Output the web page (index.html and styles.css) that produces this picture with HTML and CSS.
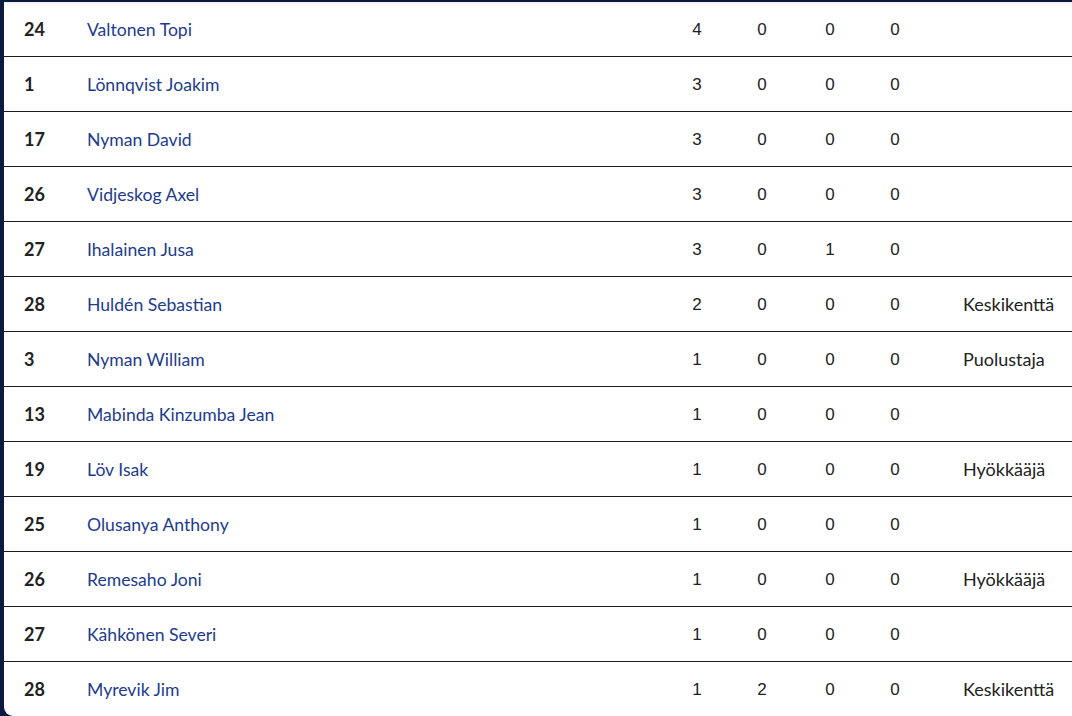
FILE: index.html
```html
<!DOCTYPE html>
<html lang="fi">
<head>
<meta charset="utf-8">
<title>Pelaajat</title>
<link rel="stylesheet" href="styles.css">
</head>
<body>
<div class="frame">
  <div class="card">
    <div class="row"><span class="num">24</span><a class="name">Valtonen Topi</a><span class="st">4</span><span class="st">0</span><span class="st">0</span><span class="st">0</span><span class="pos"></span></div>
    <div class="row"><span class="num">1</span><a class="name">Lönnqvist Joakim</a><span class="st">3</span><span class="st">0</span><span class="st">0</span><span class="st">0</span><span class="pos"></span></div>
    <div class="row"><span class="num">17</span><a class="name">Nyman David</a><span class="st">3</span><span class="st">0</span><span class="st">0</span><span class="st">0</span><span class="pos"></span></div>
    <div class="row"><span class="num">26</span><a class="name">Vidjeskog Axel</a><span class="st">3</span><span class="st">0</span><span class="st">0</span><span class="st">0</span><span class="pos"></span></div>
    <div class="row"><span class="num">27</span><a class="name">Ihalainen Jusa</a><span class="st">3</span><span class="st">0</span><span class="st">1</span><span class="st">0</span><span class="pos"></span></div>
    <div class="row"><span class="num">28</span><a class="name">Huldén Sebastian</a><span class="st">2</span><span class="st">0</span><span class="st">0</span><span class="st">0</span><span class="pos">Keskikenttä</span></div>
    <div class="row"><span class="num">3</span><a class="name">Nyman William</a><span class="st">1</span><span class="st">0</span><span class="st">0</span><span class="st">0</span><span class="pos">Puolustaja</span></div>
    <div class="row"><span class="num">13</span><a class="name">Mabinda Kinzumba Jean</a><span class="st">1</span><span class="st">0</span><span class="st">0</span><span class="st">0</span><span class="pos"></span></div>
    <div class="row"><span class="num">19</span><a class="name">Löv Isak</a><span class="st">1</span><span class="st">0</span><span class="st">0</span><span class="st">0</span><span class="pos">Hyökkääjä</span></div>
    <div class="row"><span class="num">25</span><a class="name">Olusanya Anthony</a><span class="st">1</span><span class="st">0</span><span class="st">0</span><span class="st">0</span><span class="pos"></span></div>
    <div class="row"><span class="num">26</span><a class="name">Remesaho Joni</a><span class="st">1</span><span class="st">0</span><span class="st">0</span><span class="st">0</span><span class="pos">Hyökkääjä</span></div>
    <div class="row"><span class="num">27</span><a class="name">Kähkönen Severi</a><span class="st">1</span><span class="st">0</span><span class="st">0</span><span class="st">0</span><span class="pos"></span></div>
    <div class="row last"><span class="num">28</span><a class="name">Myrevik Jim</a><span class="st">1</span><span class="st">2</span><span class="st">0</span><span class="st">0</span><span class="pos">Keskikenttä</span></div>
  </div>
</div>
</body>
</html>
```

FILE: styles.css
```css
html, body {
  margin: 0;
  padding: 0;
  background: #0b1a3e;
  overflow: hidden;
}

.frame {
  padding: 2px 0 0 4px;
  height: 716px;
  box-sizing: border-box;
}

.card {
  background: #ffffff;
  border-radius: 0 0 0 9px;
  height: 714px;
  box-shadow: inset 0 6px 6px -6px rgba(11, 26, 62, 0.12);
}

.row {
  display: grid;
  grid-template-columns: 63px 577px 66px 64px 72px 58px 148px;
  align-items: center;
  height: 54px;
  padding-left: 20px;
  border-bottom: 1px solid #161c2c;
  font-family: Lato, "Open Sans", sans-serif;
  font-size: 18px;
  color: #222222;
}

.row.last {
  border-bottom: none;
}

.num {
  font-weight: 700;
  color: #222222;
}

.name {
  color: #1d3c8e;
  font-size: 17.6px;
  text-decoration: none;
}

.st {
  text-align: center;
  font-family: "Liberation Sans", Arial, sans-serif;
  font-size: 17px;
  line-height: 20px;
  padding-top: 2px;
  color: #222222;
}

.pos {
  padding-left: 39px;
  color: #222222;
}
```
